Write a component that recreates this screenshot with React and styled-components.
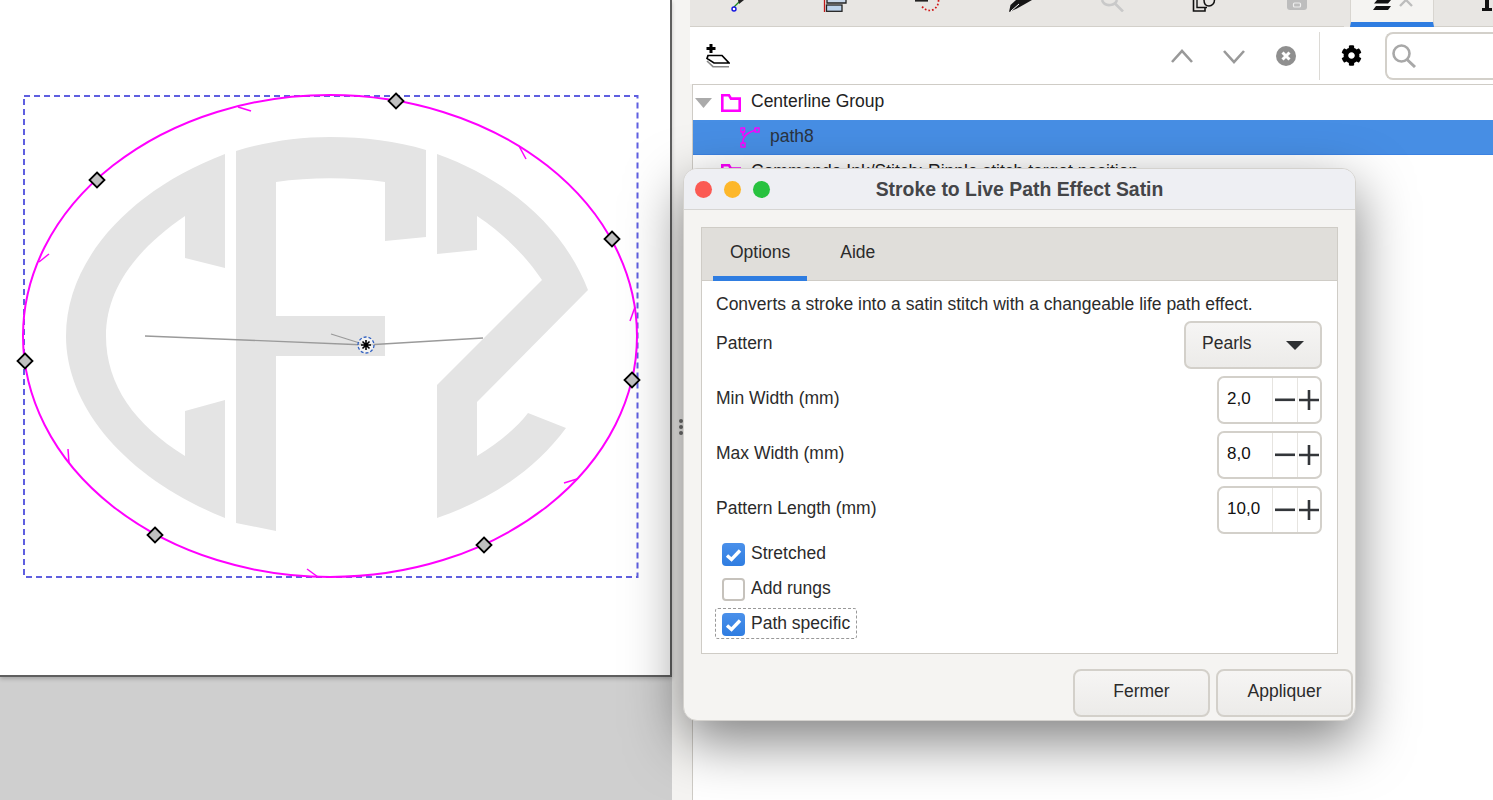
import React from 'react';
import styled, { createGlobalStyle } from 'styled-components';
import { FaCog } from 'react-icons/fa';

const GlobalStyle = createGlobalStyle`
    html, body {
        margin: 0;
        padding: 0;
        background: #f5f4f2;
        overflow: hidden;
    }
    * {
        box-sizing: border-box;
    }
`;

const Page = styled.div`
    position: relative;
    display: flex;
    width: 1493px;
    height: 800px;
    overflow: hidden;
    background: #f5f4f2;
    font-family: "Liberation Sans", Arial, sans-serif;
    font-size: 17.5px;
    color: #2b2b2b;
`;

const CanvasColumn = styled.div`
    flex: none;
    width: 672px;
    height: 800px;
    background: #cfcfcf;
`;
const Paper = styled.div`
    width: 672px;
    height: 677px;
    background: #fff;
    border-right: 2px solid #5f5f5f;
    border-bottom: 2px solid #5f5f5f;
    box-shadow: 0 2px 4px rgba(0, 0, 0, 0.2);
    svg {
        display: block;
    }
`;

const Gutter = styled.div`
    flex: none;
    width: 18px;
    display: flex;
    flex-direction: column;
    align-items: center;
    justify-content: center;
    gap: 2px;
    padding-top: 54px;
`;
const GripDot = styled.span`
    width: 4px;
    height: 4px;
    border-radius: 50%;
    background: #707070;
`;

const Panel = styled.div`
    flex: 1;
    display: flex;
    flex-direction: column;
    min-width: 0;
`;
const TabBar = styled.div`
    flex: none;
    display: flex;
    height: 27px;
    background: #e8e6e3;
    overflow: hidden;
`;
const DockTab = styled.div`
    flex: none;
    display: flex;
    justify-content: ${p => (p.$end ? 'flex-end' : 'center')};
    width: ${p => p.$w}px;
    height: 27px;
    border-bottom: 1px solid #d3d0ca;
    svg {
        display: block;
    }
`;
const ActiveDockTab = styled.div`
    flex: none;
    width: 84px;
    height: 27px;
    margin-left: 6px;
    background: #f5f4f2;
    border-left: 1px solid #d8d5d0;
    border-right: 1px solid #d8d5d0;
    border-bottom: 5px solid #2f7de1;
    svg {
        display: block;
    }
`;

const Toolbar = styled.div`
    flex: none;
    display: flex;
    align-items: center;
    height: 57px;
    background: #fff;
`;
const AddLayer = styled.div`
    flex: none;
    width: 466px;
    padding-left: 16px;
    svg {
        display: block;
    }
`;
const ToolButton = styled.div`
    flex: none;
    display: flex;
    align-items: center;
    justify-content: center;
    width: 52px;
    height: 48px;
    color: #000;
`;
const ToolSeparator = styled.div`
    flex: none;
    width: 1px;
    height: 48px;
    margin: 0 5px 0 7px;
    background: #dcdad6;
`;
const SearchBox = styled.div`
    flex: none;
    display: flex;
    align-items: center;
    width: 108px;
    height: 48px;
    margin-left: 8px;
    padding-left: 5px;
    background: #fff;
    border: 2px solid #d3d0ca;
    border-right: none;
    border-radius: 8px 0 0 8px;
`;

const LayerList = styled.div`
    flex: 1;
    margin-left: 2px;
    background: #fff;
    border-top: 1px solid #cfccc6;
    border-left: 1px solid #cfccc6;
`;
const LayerRow = styled.div`
    display: flex;
    align-items: center;
    height: 35px;
    padding-left: ${p => p.$indent}px;
    background: ${p => (p.$selected ? '#478ee4' : 'transparent')};
    border-bottom: ${p => (p.$selected ? '1px solid #3b82e2' : 'none')};
    color: ${p => (p.$selected ? '#2a3340' : '#222')};
    white-space: nowrap;
    svg {
        flex: none;
        display: block;
    }
`;
const FolderSlot = styled.span`
    flex: none;
    margin-left: ${p => p.$gap}px;
`;
const LayerName = styled.span`
    margin-left: ${p => p.$gap}px;
    padding-bottom: 2px;
`;

const Dialog = styled.div`
    position: absolute;
    left: 683px;
    top: 168px;
    width: 673px;
    height: 553px;
    display: flex;
    flex-direction: column;
    background: #f5f4f2;
    border: 1px solid #d4d2ce;
    border-radius: 14px;
    box-shadow: 0 20px 55px rgba(0, 0, 0, 0.5);
    overflow: hidden;
`;
const TitleBar = styled.div`
    position: relative;
    flex: none;
    display: flex;
    align-items: center;
    justify-content: center;
    height: 41px;
    background: #eeeff3;
    border-bottom: 1px solid #d6d5d3;
`;
const TrafficLights = styled.div`
    position: absolute;
    left: 11px;
    top: 12px;
    display: flex;
    gap: 12px;
`;
const TrafficLight = styled.span`
    width: 17px;
    height: 17px;
    border-radius: 50%;
    background: ${p => p.$color};
`;
const Title = styled.div`
    font-size: 19.4px;
    font-weight: 700;
    color: #444548;
`;
const DialogBody = styled.div`
    flex: 1;
    display: flex;
    flex-direction: column;
    padding: 17px 17px 0;
    min-height: 0;
`;
const Notebook = styled.div`
    flex: none;
    height: 427px;
    display: flex;
    flex-direction: column;
    background: #fff;
    border: 1px solid #cfccc6;
`;
const NoteTabs = styled.div`
    flex: none;
    display: flex;
    gap: 16px;
    height: 53px;
    padding-left: 11px;
    background: #e0deda;
    border-bottom: 1px solid #cfccc6;
`;
const NoteTab = styled.div`
    display: flex;
    align-items: center;
    height: 53px;
    padding: 0 17px;
    border-bottom: 5px solid ${p => (p.$active ? '#2f7de1' : 'transparent')};
`;
const NoteContent = styled.div`
    flex: 1;
    display: flex;
    flex-direction: column;
    padding: 13px 15px 0 14px;
`;
const Description = styled.div`
    height: 20px;
    line-height: 20px;
    margin-bottom: 7px;
    white-space: nowrap;
`;
const FieldRow = styled.div`
    display: flex;
    align-items: center;
    justify-content: space-between;
    height: 48px;
    margin-bottom: 7px;
`;
const FieldLabel = styled.span`
    padding-bottom: 4px;
`;
const Combo = styled.div`
    display: flex;
    align-items: center;
    justify-content: space-between;
    width: 138px;
    height: 48px;
    padding: 0 16px;
    background: linear-gradient(#f6f5f4, #ecebe9);
    border: 2px solid #d3d0ca;
    border-radius: 7px;
`;
const ComboText = styled.span`
    padding-bottom: 3px;
`;
const ComboArrow = styled.span`
    width: 0;
    height: 0;
    border-left: 9px solid transparent;
    border-right: 9px solid transparent;
    border-top: 9px solid #2f3133;
`;
const Spin = styled.div`
    display: flex;
    width: 105px;
    height: 48px;
    background: #fff;
    border: 2px solid #d3d0ca;
    border-radius: 7px;
    color: #111;
`;
const SpinValue = styled.div`
    display: flex;
    align-items: center;
    width: 53px;
    padding: 0 0 2px 8px;
    font-size: 17px;
`;
const SpinButton = styled.div`
    display: flex;
    align-items: center;
    justify-content: center;
    width: ${p => p.$w}px;
    border-left: 1px solid #e6e4e0;
`;
const Checks = styled.div`
    display: flex;
    flex-direction: column;
    align-items: flex-start;
    gap: 12px;
    margin-top: 2px;
`;
const CheckRow = styled.div`
    position: relative;
    display: flex;
    align-items: center;
    gap: 6px;
    height: 23px;
    padding: 0 6px;
    &::before {
        content: '';
        display: ${p => (p.$focused ? 'block' : 'none')};
        position: absolute;
        left: -1px;
        right: -1px;
        top: -5px;
        bottom: -3px;
        border: 1px dashed #999;
        border-radius: 3px;
    }
`;
const CheckLabel = styled.span`
    padding-bottom: 2px;
`;
const CheckBox = styled.span`
    flex: none;
    display: flex;
    align-items: center;
    justify-content: center;
    width: 23px;
    height: 23px;
    border-radius: 4px;
    background: ${p => (p.$checked ? 'linear-gradient(#4a90ea, #2f7de1)' : '#fff')};
    border: ${p => (p.$checked ? 'none' : '2px solid #c6c2bc')};
`;
const Footer = styled.div`
    flex: none;
    display: flex;
    justify-content: flex-end;
    gap: 6px;
    margin: 15px -15px 0 0;
`;
const FooterButton = styled.div`
    display: flex;
    align-items: center;
    justify-content: center;
    width: 137px;
    height: 48px;
    padding-bottom: 3px;
    background: linear-gradient(#f6f5f4, #ecebe9);
    border: 2px solid #d3d0ca;
    border-radius: 8px;
`;

const nodes = [[25, 361], [97, 180], [396, 101], [612, 239], [632, 380], [484, 545], [155, 535]];
const ticks = [
    'M251 111 L238 107',
    'M49 254 L39 262',
    'M526 159 L519 146',
    'M630 321 L635 307',
    'M68 449 L69 463',
    'M307 569 L318 577',
    'M564 483 L577 479',
];

const Artwork = () => (
    <svg width="670" height="675" viewBox="0 0 670 675">
        <g fill="#e4e4e4">
            <path d="M225 154 C130 190 66 260 66 336 C66 410 130 480 225 518 V400 L185 411 V456 C135 425 106 385 106 336 C106 290 135 250 185 216 V258 L225 268 Z" />
            <path d="M236 151 C265 142 298 137 330 137 C365 137 396 141 426 150 V237 L385 241 V182 C350 177 310 177 276 182 V316 H385 V356 H276 V531 L236 523 Z" />
            <path d="M437 154 C510 180 565 230 588 290 L477 402 V456 C495 445 515 430 528 413 L566 428 C535 470 490 500 437 518 V385 L542 280 C525 255 505 235 477 216 V250 L437 254 Z" />
        </g>
        <rect x="24" y="96" width="613.5" height="481" fill="none" stroke="#5f5fe0" strokeWidth="2" strokeDasharray="6 4" />
        <ellipse cx="330" cy="336" rx="307" ry="241" fill="none" stroke="#ff00ff" strokeWidth="2" />
        <g fill="none" stroke="#ff00ff" strokeWidth="1.5">
            {ticks.map(d => <path key={d} d={d} />)}
        </g>
        <path d="M145 336 L366 345 L483 338 M331 334 L366 345" fill="none" stroke="#9a9a9a" strokeWidth="1.3" />
        {nodes.map(([x, y]) => (
            <polygon
                key={x}
                points={`${x},${y - 7.5} ${x + 7.5},${y} ${x},${y + 7.5} ${x - 7.5},${y}`}
                fill="#c0c0c0"
                stroke="#000"
                strokeWidth="1.8"
            />
        ))}
        <circle cx="366" cy="345" r="8" fill="#fff" fillOpacity="0.5" stroke="#2f5fc0" strokeWidth="1.3" strokeDasharray="3 2" />
        <path d="M366 340 V350 M361 345 H371 M362.5 341.5 L369.5 348.5 M369.5 341.5 L362.5 348.5" stroke="#000" strokeWidth="1.6" />
    </svg>
);

const ClippedIcon = ({ children }) => (
    <svg width="30" height="12" viewBox="0 0 30 12">{children}</svg>
);

const dockTabs = [
    {
        w: 88,
        icon: (
            <>
                <path d="M15 7 L22 0" stroke="#1a8a1a" strokeWidth="1.3" />
                <path d="M19 0 L20 4 L25 0 Z" fill="#222" />
                <circle cx="15" cy="9" r="2" fill="#fff" stroke="#1414e0" strokeWidth="1.4" />
            </>
        ),
    },
    {
        w: 110,
        icon: (
            <>
                <path d="M6.5 0 V12" stroke="#c01818" strokeWidth="1.3" />
                <path d="M9 0 V3 H28 V0" fill="#c9d8ea" stroke="#222" strokeWidth="1.3" />
                <rect x="8.5" y="5" width="15.5" height="6.3" fill="#bcd3ec" stroke="#222" strokeWidth="1.3" />
            </>
        ),
    },
    {
        w: 84,
        icon: (
            <>
                <rect x="0" y="0" width="13" height="1.6" fill="#222" />
                <path d="M23.5 0 C24 6 19 10.5 15 10.5 C12 10.5 9 9 7 6.5" fill="none" stroke="#d01818" strokeWidth="1.7" strokeDasharray="1.7 2" />
            </>
        ),
    },
    {
        w: 94,
        icon: (
            <>
                <path d="M5 12 L6.5 5 L12 0 H28 L21 4 L13 8.5 Z" fill="#161616" />
                <path d="M7 11 L15 4" stroke="#fff" strokeWidth="1" />
            </>
        ),
    },
    {
        w: 90,
        icon: (
            <>
                <path d="M6 0 C7.5 4 11 5.5 14.5 5 C17.5 4.7 20 3 21 0 M19 3.5 L27 11.5" fill="none" stroke="#c9c9c9" strokeWidth="2.6" />
            </>
        ),
    },
    {
        w: 94,
        icon: (
            <>
                <path d="M5.5 0 V11 H17 V8" fill="none" stroke="#111" strokeWidth="1.6" />
                <path d="M9 0 V7.5 H19" fill="none" stroke="#111" strokeWidth="1.4" />
                <path d="M16 0 C16 4 18 6 21 6 C24 6 26.5 3.5 26.5 0" fill="none" stroke="#111" strokeWidth="1.5" />
            </>
        ),
    },
    {
        w: 94,
        icon: (
            <>
                <path d="M5 0 V7 Q5 10 8 10 H22 Q25 10 25 7 V0 Z" fill="#bdbdbd" />
                <rect x="11.5" y="3" width="7" height="4" rx="1" fill="none" stroke="#eee" strokeWidth="1.2" />
            </>
        ),
    },
];

const Chevron = ({ up }) => (
    <svg width="24" height="16" viewBox="0 0 24 16">
        <path
            d={up ? 'M2 14 L12 3 L22 14' : 'M2 3 L12 14 L22 3'}
            fill="none"
            stroke="#999"
            strokeWidth="2.6"
        />
    </svg>
);

const Minus = () => (
    <svg width="20" height="4" viewBox="0 0 20 4">
        <rect y="0.5" width="20" height="2.6" fill="#33363a" />
    </svg>
);
const Plus = () => (
    <svg width="20" height="20" viewBox="0 0 20 20">
        <path d="M0 10 H20 M10 0 V20" stroke="#33363a" strokeWidth="2.6" />
    </svg>
);
const Check = () => (
    <svg width="17" height="14" viewBox="0 0 17 14">
        <path d="M2 7.5 L6.5 11.5 L15 2.5" fill="none" stroke="#fff" strokeWidth="3.4" />
    </svg>
);

const FolderIcon = () => (
    <svg width="20" height="18" viewBox="0 0 20 18">
        <path d="M1.3 16.7 V1.3 H8 L10 4.6 H18.7 V16.7 Z" fill="#fff" stroke="#ff00ff" strokeWidth="2.6" />
    </svg>
);

const fields = [
    { label: 'Min Width (mm)', value: '2,0' },
    { label: 'Max Width (mm)', value: '8,0' },
    { label: 'Pattern Length (mm)', value: '10,0' },
];

export default function App() {
    return (
        <Page>
            <GlobalStyle />
            <CanvasColumn>
                <Paper>
                    <Artwork />
                </Paper>
            </CanvasColumn>
            <Gutter>
                <GripDot />
                <GripDot />
                <GripDot />
            </Gutter>
            <Panel>
                <TabBar>
                    {dockTabs.map((tab, i) => (
                        <DockTab key={i} $w={tab.w}>
                            <ClippedIcon>{tab.icon}</ClippedIcon>
                        </DockTab>
                    ))}
                    <ActiveDockTab>
                        <svg width="64" height="12" viewBox="0 0 64 12">
                            <path d="M26 0 H40 L37 3.5 H23 Z M25 6 H40 L37 10 H22 Z" fill="#111" />
                            <path d="M49 6 L55 0 L61 6" fill="none" stroke="#bdbdbd" strokeWidth="2.4" />
                        </svg>
                    </ActiveDockTab>
                    <DockTab $w={59} $end>
                        <svg width="12" height="12" viewBox="0 0 12 12">
                            <path d="M4 0 H8 V8 H11 V11 H1 V8 H4 Z" fill="#111" />
                        </svg>
                    </DockTab>
                </TabBar>
                <Toolbar>
                    <AddLayer>
                        <svg width="24" height="24" viewBox="0 0 24 24">
                            <path d="M5 0 V9 M0.5 4.5 H9.5" stroke="#000" strokeWidth="3" />
                            <path d="M2 11.5 H16 L23 19 H8 L1 14.5 Z" fill="#fff" stroke="#000" strokeWidth="1.7" />
                            <path d="M1 17 L7 22.7 H23" fill="none" stroke="#888" strokeWidth="1.6" />
                        </svg>
                    </AddLayer>
                    <ToolButton><Chevron up /></ToolButton>
                    <ToolButton><Chevron /></ToolButton>
                    <ToolButton>
                        <svg width="20" height="20" viewBox="0 0 20 20">
                            <circle cx="10" cy="10" r="10" fill="#8f8f8f" />
                            <path d="M6.5 6.5 L13.5 13.5 M13.5 6.5 L6.5 13.5" stroke="#fff" strokeWidth="3" />
                        </svg>
                    </ToolButton>
                    <ToolSeparator />
                    <ToolButton><FaCog size={21} /></ToolButton>
                    <SearchBox>
                        <svg width="24" height="24" viewBox="0 0 24 24">
                            <circle cx="9.5" cy="9.5" r="8" fill="none" stroke="#a8a8a8" strokeWidth="2.6" />
                            <path d="M15 15.5 L23 23" stroke="#a8a8a8" strokeWidth="3" />
                        </svg>
                    </SearchBox>
                </Toolbar>
                <LayerList>
                    <LayerRow $indent={2}>
                        <svg width="17" height="10" viewBox="0 0 17 10">
                            <path d="M0 0 H17 L8.5 10 Z" fill="#aaa" />
                        </svg>
                        <FolderSlot $gap={9}><FolderIcon /></FolderSlot>
                        <LayerName $gap={10}>Centerline Group</LayerName>
                    </LayerRow>
                    <LayerRow $selected $indent={47}>
                        <svg width="20" height="21" viewBox="0 0 20 21">
                            <path d="M3 17 C2 11 5 6 16 3" fill="none" stroke="#ff00ff" strokeWidth="1.5" />
                            <path d="M3 4 V9" stroke="#ff00ff" strokeWidth="1.5" />
                            <rect x="1" y="1" width="3.5" height="4" fill="none" stroke="#ff00ff" strokeWidth="1.4" />
                            <rect x="15" y="1" width="4" height="4" fill="none" stroke="#ff00ff" strokeWidth="1.4" />
                            <rect x="1" y="16" width="4" height="4" fill="none" stroke="#ff00ff" strokeWidth="1.4" />
                        </svg>
                        <LayerName $gap={10}>path8</LayerName>
                    </LayerRow>
                    <LayerRow $indent={5}>
                        <svg width="8" height="10" viewBox="0 0 8 10">
                            <path d="M0 0 L8 5 L0 10 Z" fill="#888" />
                        </svg>
                        <FolderSlot $gap={15}><FolderIcon /></FolderSlot>
                        <LayerName $gap={10}>Commande Ink/Stitch: Ripple stitch target position</LayerName>
                    </LayerRow>
                </LayerList>
            </Panel>
            <Dialog>
                <TitleBar>
                    <TrafficLights>
                        <TrafficLight $color="#fb5a53" />
                        <TrafficLight $color="#fdb72a" />
                        <TrafficLight $color="#28c23f" />
                    </TrafficLights>
                    <Title>Stroke to Live Path Effect Satin</Title>
                </TitleBar>
                <DialogBody>
                    <Notebook>
                        <NoteTabs>
                            <NoteTab $active>Options</NoteTab>
                            <NoteTab>Aide</NoteTab>
                        </NoteTabs>
                        <NoteContent>
                            <Description>Converts a stroke into a satin stitch with a changeable life path effect.</Description>
                            <FieldRow>
                                <FieldLabel>Pattern</FieldLabel>
                                <Combo>
                                    <ComboText>Pearls</ComboText>
                                    <ComboArrow />
                                </Combo>
                            </FieldRow>
                            {fields.map(field => (
                                <FieldRow key={field.label}>
                                    <FieldLabel>{field.label}</FieldLabel>
                                    <Spin>
                                        <SpinValue>{field.value}</SpinValue>
                                        <SpinButton $w={25}><Minus /></SpinButton>
                                        <SpinButton $w={23}><Plus /></SpinButton>
                                    </Spin>
                                </FieldRow>
                            ))}
                            <Checks>
                                <CheckRow>
                                    <CheckBox $checked><Check /></CheckBox>
                                    <CheckLabel>Stretched</CheckLabel>
                                </CheckRow>
                                <CheckRow>
                                    <CheckBox />
                                    <CheckLabel>Add rungs</CheckLabel>
                                </CheckRow>
                                <CheckRow $focused>
                                    <CheckBox $checked><Check /></CheckBox>
                                    <CheckLabel>Path specific</CheckLabel>
                                </CheckRow>
                            </Checks>
                        </NoteContent>
                    </Notebook>
                    <Footer>
                        <FooterButton>Fermer</FooterButton>
                        <FooterButton>Appliquer</FooterButton>
                    </Footer>
                </DialogBody>
            </Dialog>
        </Page>
    );
}
